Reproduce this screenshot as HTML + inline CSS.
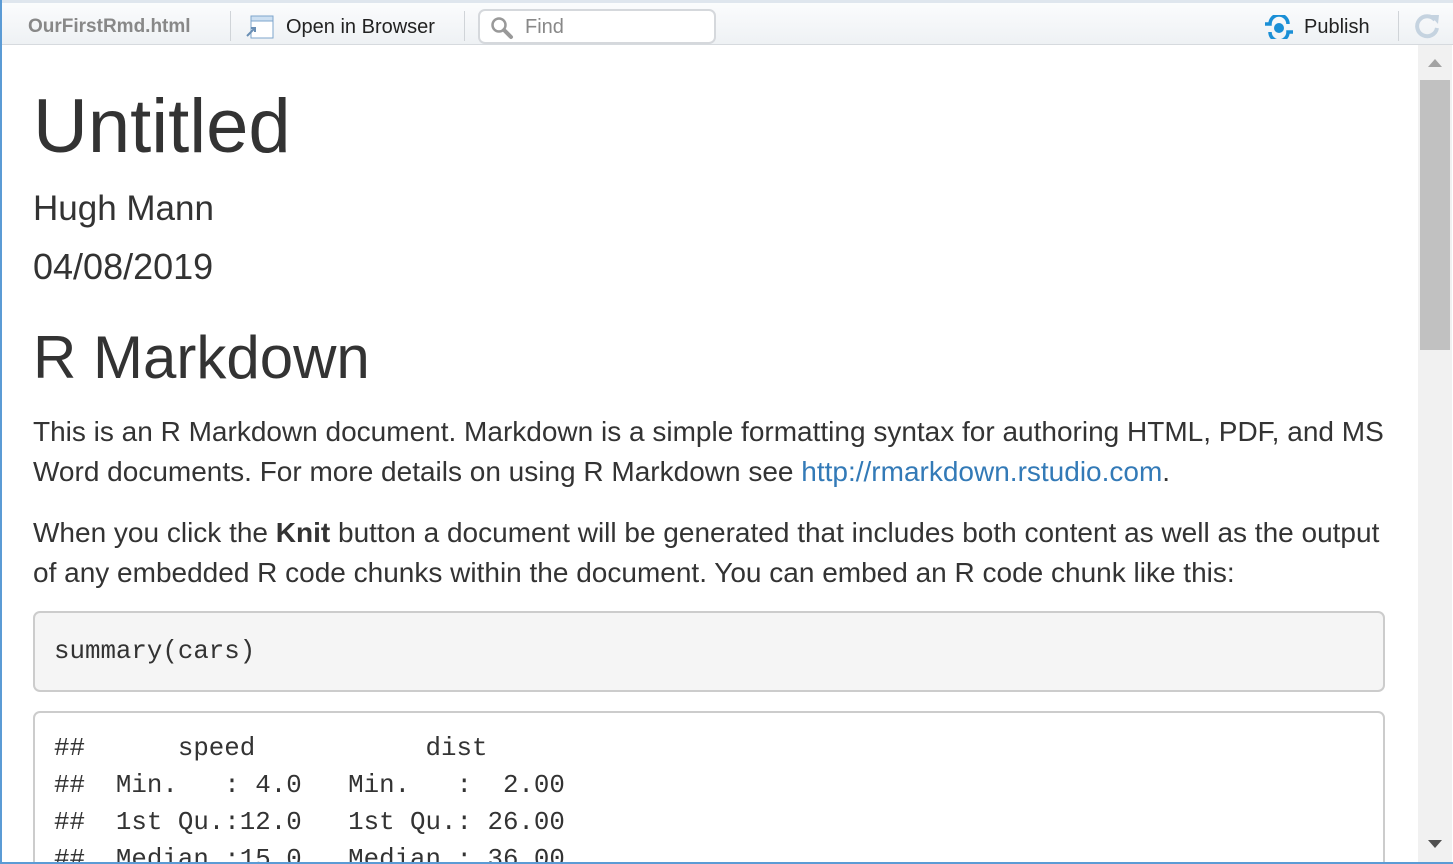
<!DOCTYPE html>
<html><head><meta charset="utf-8"><style>
*{box-sizing:border-box;margin:0;padding:0}
body{width:1453px;height:864px;overflow:hidden;background:#fff;font-family:"Liberation Sans",Arial,sans-serif;position:relative;border-left:2px solid #5b9bd5;border-bottom:2px solid #5b9bd5}
.tb{position:absolute;left:0;top:0;width:1453px;height:45px;background:linear-gradient(#fbfcfd,#eef1f4);border-bottom:1px solid #d6dade;border-top:3px solid #dfe6ee}
.tb .t{position:absolute;top:13px;font-size:20px}
.sep{position:absolute;top:8px;width:1px;height:30px;background:#d0d4d8}
.find{position:absolute;left:476px;top:6px;width:238px;height:35px;border:2px solid #d5d8dc;border-radius:7px;background:#fff}
.c{position:absolute;left:31px;top:45px;width:1352px;height:817px;overflow:hidden;color:#333}
h1.title{font-size:76px;font-weight:400;margin-top:42px;line-height:80px}
.au{font-size:35px;margin-top:22px;line-height:40px}
.dt{font-size:36px;margin-top:18px;line-height:40px}
h1.s{font-size:60px;font-weight:400;margin-top:38px;line-height:66px}
p{font-size:28px;line-height:40px;margin-top:21px}
a{color:#337ab7;text-decoration:none}
pre{font-family:"Liberation Mono",monospace;font-size:25.8px;color:#333;border:2px solid #ccc;border-radius:7px;padding:0 19px;line-height:37px}
.sb{position:absolute;left:1416px;top:45px;width:34px;height:817px;background:#f1f1f1}
</style></head><body>
<div class="c">
<h1 class="title">Untitled</h1>
<div class="au">Hugh Mann</div>
<div class="dt">04/08/2019</div>
<h1 class="s">R Markdown</h1>
<p style="margin-top:21px">This is an R Markdown document. Markdown is a simple formatting syntax for authoring HTML, PDF, and MS Word documents. For more details on using R Markdown see <a>http://rmarkdown.rstudio.com</a>.</p>
<p>When you click the <b>Knit</b> button a document will be generated that includes both content as well as the output of any embedded R code chunks within the document. You can embed an R code chunk like this:</p>
<pre style="background:#f5f5f5;margin-top:18px;padding-top:20px;padding-bottom:20px">summary(cars)</pre>
<pre style="background:#fff;margin-top:19px;padding-top:17px">##      speed           dist       
##  Min.   : 4.0   Min.   :  2.00  
##  1st Qu.:12.0   1st Qu.: 26.00  
##  Median :15.0   Median : 36.00  </pre>
</div>
<div class="sb"><div style="position:absolute;left:10px;top:14px;border-left:7px solid transparent;border-right:7px solid transparent;border-bottom:8px solid #a3a3a3"></div><div style="position:absolute;left:2px;top:35px;width:30px;height:270px;background:#c1c1c1"></div><div style="position:absolute;left:10px;bottom:14px;border-left:7px solid transparent;border-right:7px solid transparent;border-top:8px solid #505050"></div></div>
<div class="tb">
<div class="t" style="left:26px;color:#888;font-weight:bold;font-size:19px">OurFirstRmd.html</div>
<div class="sep" style="left:228px"></div>
<svg style="position:absolute;left:243px;top:11px" width="30" height="26" viewBox="0 0 30 26"><rect x="6" y="2" width="22" height="22" fill="#fff" stroke="#7ea6cc"/><rect x="6" y="2" width="22" height="5" fill="#cde0f2" stroke="#7ea6cc"/><path d="M2 22 L10 14 M6 14 H10 V18" stroke="#6a8fb5" stroke-width="2" fill="none"/></svg>
<div class="t" style="left:284px;color:#222">Open in Browser</div>
<div class="sep" style="left:462px"></div>
<div class="find"><svg style="position:absolute;left:10px;top:5px" width="24" height="24" viewBox="0 0 24 24"><circle cx="9" cy="9" r="6.5" stroke="#999" stroke-width="2.5" fill="none"/><path d="M14 14 L21 21" stroke="#999" stroke-width="4" stroke-linecap="round"/></svg><span style="position:absolute;left:45px;top:5px;font-size:20px;color:#888">Find</span></div>
<svg style="position:absolute;left:1260px;top:12px" width="34" height="24" viewBox="0 0 34 24"><circle cx="17" cy="13" r="5" fill="#1a8fd6"/><path d="M3 9 H8 A9 9 0 0 1 26 9 M8 17 A9 9 0 0 0 26 17 H31" stroke="#1a8fd6" stroke-width="3.5" fill="none"/></svg>
<div class="t" style="left:1302px;color:#222">Publish</div>
<div class="sep" style="left:1396px"></div>
<svg style="position:absolute;left:1410px;top:8px" width="30" height="30" viewBox="0 0 30 30"><path d="M23 9 A10 10 0 1 0 25 17" stroke="#c5d3e0" stroke-width="4" fill="none"/><path d="M18 4 L27 4 L26 13 Z" fill="#c5d3e0"/></svg>
</div>
</body></html>
